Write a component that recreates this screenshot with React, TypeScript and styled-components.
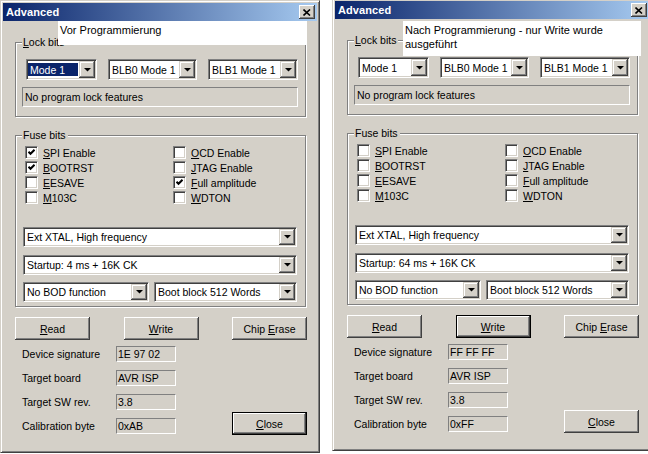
import React from "react";
import styled, { createGlobalStyle } from "styled-components";

const GlobalStyle = createGlobalStyle`
  body {
    margin: 0;
    background: #fff;
  }
`;

type Checks = Record<string, boolean>;

type DialogProps = {
  shift: number;
  note: string[];
  noteBox: { left: number; top: number; width: number; height: number };
  modeSelected: boolean;
  checks: Checks;
  startup: string;
  signature: string;
  calibration: string;
  defaultButton: "write" | "close";
};

const fuses = [
  { id: "spi", text: "&SPI Enable" },
  { id: "bootrst", text: "&BOOTRST" },
  { id: "eesave", text: "&EESAVE" },
  { id: "m103c", text: "&M103C" },
  { id: "ocd", text: "&OCD Enable" },
  { id: "jtag", text: "&JTAG Enable" },
  { id: "full", text: "&Full amplitude" },
  { id: "wdton", text: "&WDTON" },
];

// "&X" marks the access key, as in a Windows resource file
const AccessText = ({ text }: { text: string }) => {
  const i = text.indexOf("&");
  if (i < 0) return <>{text}</>;
  return (
    <>
      {text.slice(0, i)}
      <u>{text[i + 1]}</u>
      {text.slice(i + 2)}
    </>
  );
};

const Arrow = () => (
  <svg width="7" height="4" viewBox="0 0 7 4">
    <polygon points="0,0 7,0 3.5,3.6" fill="#000" />
  </svg>
);

const CheckMark = () => (
  <svg width="7" height="7" viewBox="0 0 7 7">
    <path d="M0.5 2.8 L2.5 4.8 L6.5 0.8" stroke="#000" strokeWidth="2" fill="none" />
  </svg>
);

const CloseGlyph = () => (
  <svg width="8" height="7" viewBox="0 0 8 7">
    <path d="M0.5 0.5 L7 6.5 M7 0.5 L0.5 6.5" stroke="#000" strokeWidth="1.6" fill="none" />
  </svg>
);

const Dropdown = ({
  text,
  width,
  selected,
  height = 21,
}: {
  text: string;
  width?: number;
  selected?: boolean;
  height?: number;
}) => (
  <Combo $w={width} $h={height}>
    <ComboText $selected={selected}>{text}</ComboText>
    <DropButton>
      <Arrow />
    </DropButton>
  </Combo>
);

const Dialog = ({
  shift,
  note,
  noteBox,
  modeSelected,
  checks,
  startup,
  signature,
  calibration,
  defaultButton,
}: DialogProps) => {
  return (
    <Window $shift={shift}>
      <TitleBar>
        <Title>Advanced</Title>
        <CaptionButton>
          <CloseGlyph />
        </CaptionButton>
      </TitleBar>

      <Client>
        <Group>
          <GroupLabel>
            <AccessText text="&Lock bits" />
          </GroupLabel>
          <LockBody>
            <LockRow>
              <Dropdown text="Mode 1" width={71} selected={modeSelected} />
              <Dropdown text="BLB0 Mode 1" width={89} />
              <Dropdown text="BLB1 Mode 1" width={90} />
            </LockRow>
            <StaticBox>No program lock features</StaticBox>
          </LockBody>
        </Group>

        <Group $gap={18}>
          <GroupLabel>Fuse bits</GroupLabel>
          <FuseBody>
            <CheckGrid>
              {fuses.map((f) => (
                <CheckRow key={f.id}>
                  <CheckBox>{checks[f.id] && <CheckMark />}</CheckBox>
                  <span>
                    <AccessText text={f.text} />
                  </span>
                </CheckRow>
              ))}
            </CheckGrid>
            <ComboStack>
              <Dropdown text="Ext XTAL, High frequency" height={20} />
              <Dropdown text={startup} height={20} />
              <ComboPair>
                <Dropdown text="No BOD function" width={126} height={20} />
                <Dropdown text="Boot block 512 Words" width={143} height={20} />
              </ComboPair>
            </ComboStack>
          </FuseBody>
        </Group>

        <ButtonRow>
          <PushButton>
            <AccessText text="&Read" />
          </PushButton>
          <PushButton $default={defaultButton === "write"}>
            <AccessText text="&Write" />
          </PushButton>
          <PushButton>
            <AccessText text="Chip &Erase" />
          </PushButton>
        </ButtonRow>

        <InfoArea>
          <InfoGrid>
            <InfoLabel>Device signature</InfoLabel>
            <ValueBox>{signature}</ValueBox>
            <InfoLabel>Target board</InfoLabel>
            <ValueBox>AVR ISP</ValueBox>
            <InfoLabel>Target SW rev.</InfoLabel>
            <ValueBox>3.8</ValueBox>
            <InfoLabel>Calibration byte</InfoLabel>
            <ValueBox>{calibration}</ValueBox>
          </InfoGrid>
          <CloseButton $default={defaultButton === "close"}>
            <AccessText text="&Close" />
          </CloseButton>
        </InfoArea>
      </Client>

      <Note
        $left={noteBox.left}
        $top={noteBox.top}
        $width={noteBox.width}
        $height={noteBox.height}
      >
        {note.map((line) => (
          <div key={line}>{line}</div>
        ))}
      </Note>
    </Window>
  );
};

const App = () => {
  return (
    <>
      <GlobalStyle />
      <Page>
        <Dialog
          shift={0}
          note={["Vor Programmierung"]}
          noteBox={{ left: 57, top: 20, width: 249, height: 24 }}
          modeSelected
          checks={{ spi: true, bootrst: true, full: true }}
          startup="Startup: 4 ms + 16K CK"
          signature="1E 97 02"
          calibration="0xAB"
          defaultButton="close"
        />
        <Dialog
          shift={-2}
          note={["Nach Programmierung - nur Write wurde", "ausgeführt"]}
          noteBox={{ left: 70, top: 22, width: 238, height: 35 }}
          modeSelected={false}
          checks={{}}
          startup="Startup: 64 ms + 16K CK"
          signature="FF FF FF"
          calibration="0xFF"
          defaultButton="write"
        />
      </Page>
    </>
  );
};

export default App;

const Page = styled.div`
  width: 648px;
  height: 454px;
  overflow: hidden;
  display: flex;
  align-items: flex-start;
  gap: 12px;
  font-family: "Liberation Sans", Arial, sans-serif;
  font-size: 10.5px;
  color: #000;
`;

const Window = styled.div<{ $shift: number }>`
  position: relative;
  flex: none;
  width: 320px;
  height: 453px;
  margin-top: ${({ $shift }) => $shift}px;
  box-sizing: border-box;
  background: #d4d0c8;
  border: 1px solid;
  border-color: #d4d0c8 #404040 #404040 #d4d0c8;
  box-shadow: inset 1px 1px #fff, inset -1px -1px #808080;
  padding: 2px;
  display: flex;
  flex-direction: column;
`;

const TitleBar = styled.div`
  height: 18px;
  flex: none;
  display: flex;
  align-items: center;
  justify-content: space-between;
  padding: 0 2px 0 3px;
  background: linear-gradient(to right, #0a246a, #a6caf0);
`;

const Title = styled.span`
  color: #fff;
  font-weight: bold;
  font-size: 11px;
  letter-spacing: 0.1px;
`;

const CaptionButton = styled.span`
  width: 16px;
  height: 14px;
  box-sizing: border-box;
  display: flex;
  align-items: center;
  justify-content: center;
  background: #d4d0c8;
  box-shadow: inset -1px -1px #404040, inset 1px 1px #fff, inset -2px -2px #808080;
`;

const Client = styled.div`
  flex: 1;
  display: flex;
  flex-direction: column;
  padding: 21px 10px 0 12px;
`;

const Group = styled.div<{ $gap?: number }>`
  position: relative;
  margin-top: ${({ $gap }) => $gap ?? 0}px;
  margin-right: 1px;
  border: 1px solid #808080;
  box-shadow: 1px 1px 0 #fff, inset 1px 1px 0 #fff;
`;

const GroupLabel = styled.span`
  position: absolute;
  top: -7px;
  left: 6px;
  padding: 0 2px 0 1px;
  line-height: 13px;
  background: #d4d0c8;
`;

const LockBody = styled.div`
  display: flex;
  flex-direction: column;
  gap: 7px;
  padding: 16px 7px 9px 6px;
`;

const LockRow = styled.div`
  display: flex;
  justify-content: space-between;
  padding-left: 4px;
`;

const Combo = styled.div<{ $w?: number; $h: number }>`
  display: flex;
  flex: ${({ $w }) => ($w ? "none" : "1")};
  width: ${({ $w }) => ($w ? `${$w}px` : "auto")};
  height: ${({ $h }) => $h}px;
  box-sizing: border-box;
  padding: 1px;
  background: #fff;
  border: 1px solid;
  border-color: #808080 #fff #fff #808080;
  box-shadow: inset 1px 1px #404040, inset -1px -1px #d4d0c8;
`;

const ComboText = styled.span<{ $selected?: boolean }>`
  flex: 1;
  display: flex;
  align-items: center;
  margin: 2px 1px 2px 0;
  padding-left: 2px;
  white-space: nowrap;
  overflow: hidden;
  background: ${({ $selected }) => ($selected ? "#0a246a" : "transparent")};
  color: ${({ $selected }) => ($selected ? "#fff" : "#000")};
`;

const DropButton = styled.span`
  flex: none;
  width: 16px;
  display: flex;
  align-items: center;
  justify-content: center;
  background: #d4d0c8;
  box-shadow: inset -1px -1px #404040, inset 1px 1px #d4d0c8, inset -2px -2px #808080,
    inset 2px 2px #fff;
`;

const StaticBox = styled.div`
  height: 20px;
  box-sizing: border-box;
  display: flex;
  align-items: center;
  padding-left: 2px;
  border: 1px solid;
  border-color: #808080 #fff #fff #808080;
`;

const FuseBody = styled.div`
  display: flex;
  flex-direction: column;
  padding: 9px 8px 4px 7px;
`;

const CheckGrid = styled.div`
  display: grid;
  grid-template-columns: 148px auto;
  grid-template-rows: repeat(4, 15px);
  grid-auto-flow: column;
  padding-left: 2px;
`;

const CheckRow = styled.label`
  display: flex;
  align-items: center;
  gap: 5px;
  white-space: nowrap;
`;

const CheckBox = styled.span`
  flex: none;
  width: 13px;
  height: 13px;
  box-sizing: border-box;
  display: flex;
  align-items: center;
  justify-content: center;
  background: #fff;
  border: 1px solid;
  border-color: #808080 #fff #fff #808080;
  box-shadow: inset 1px 1px #404040, inset -1px -1px #d4d0c8;
`;

const ComboStack = styled.div`
  display: flex;
  flex-direction: column;
  gap: 8px;
  margin-top: 22px;

  & > :last-child {
    margin-top: -1px;
  }
`;

const ComboPair = styled.div`
  display: flex;
  justify-content: space-between;
`;

const ButtonRow = styled.div`
  display: flex;
  justify-content: space-between;
  margin-top: 10px;
`;

const PushButton = styled.button<{ $default?: boolean }>`
  width: 75px;
  height: 23px;
  padding: 0;
  font: inherit;
  color: #000;
  background: #d4d0c8;
  border: ${({ $default }) => ($default ? "1px solid #000" : "none")};
  box-shadow: inset -1px -1px #404040, inset 1px 1px #fff, inset -2px -2px #808080;
`;

const CloseButton = styled(PushButton)`
  align-self: flex-end;
  margin-bottom: -1px;
`;

const InfoArea = styled.div`
  display: flex;
  justify-content: space-between;
  align-items: flex-start;
  margin-top: 6px;
`;

const InfoGrid = styled.div`
  display: grid;
  grid-template-columns: 94px 60px;
  grid-auto-rows: 16px;
  row-gap: 8px;
  padding-left: 7px;
`;

const InfoLabel = styled.span`
  display: flex;
  align-items: center;
`;

const ValueBox = styled.span`
  display: flex;
  align-items: center;
  box-sizing: border-box;
  padding-left: 1px;
  border: 1px solid;
  border-color: #808080 #fff #fff #808080;
`;

const Note = styled.div<{ $left: number; $top: number; $width: number; $height: number }>`
  position: absolute;
  left: ${({ $left }) => $left}px;
  top: ${({ $top }) => $top}px;
  width: ${({ $width }) => $width}px;
  height: ${({ $height }) => $height}px;
  box-sizing: border-box;
  padding: 2px 0 0 2px;
  background: #fff;
  font-size: 11px;
  line-height: 14px;
`;
